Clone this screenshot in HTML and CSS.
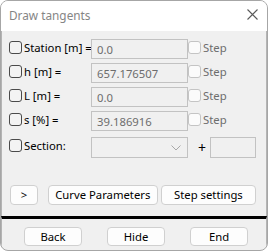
FILE: index.html
```html
<!DOCTYPE html>
<html lang="en">
<head>
    <meta charset="UTF-8">
    <title>Draw tangents</title>
    <link rel="stylesheet" href="styles.css">
</head>
<body>
    <div class="dialog">
        <div class="titlebar">
            <span class="title">Draw tangents</span>
            <svg class="close" width="11" height="11" viewBox="0 0 11 11">
                <path d="M0.5 0.5 L10.5 10.5 M10.5 0.5 L0.5 10.5" stroke="#5a5a5a" stroke-width="1.1" fill="none"/>
            </svg>
        </div>

        <div class="content">
            <div class="fields">
                <label class="check"><span class="box"></span><span class="label">Station [m] =</span></label>
                <div class="input">0.0</div>
                <label class="step"><span class="box light"></span>Step</label>

                <label class="check"><span class="box"></span><span class="label">h [m] =</span></label>
                <div class="input">657.176507</div>
                <label class="step"><span class="box light"></span>Step</label>

                <label class="check"><span class="box"></span><span class="label">L [m] =</span></label>
                <div class="input">0.0</div>
                <label class="step"><span class="box light"></span>Step</label>

                <label class="check"><span class="box"></span><span class="label">s [%] =</span></label>
                <div class="input">39.186916</div>
                <label class="step"><span class="box light"></span>Step</label>

                <label class="check section"><span class="box"></span><span class="label">Section:</span></label>
                <div class="combo section">
                    <span></span>
                    <svg width="10" height="6" viewBox="0 0 10 6">
                        <path d="M0.5 0.5 L5 5 L9.5 0.5" stroke="#a8a8a8" stroke-width="1" fill="none"/>
                    </svg>
                </div>
                <div class="plus section"><span class="sign">+</span><div class="small-input"></div></div>
            </div>

            <div class="actions">
                <button class="btn more">&gt;</button>
                <button class="btn curve">Curve Parameters</button>
                <button class="btn steps">Step settings</button>
            </div>
        </div>

        <div class="footer">
            <button class="btn foot">Back</button>
            <button class="btn foot">Hide</button>
            <button class="btn foot">End</button>
        </div>
    </div>
</body>
</html>
```

FILE: styles.css
```css
html, body {
    margin: 0;
    padding: 0;
    background: #ffffff;
}
body {
    font-family: 'Noto Sans', 'Open Sans', sans-serif;
    font-size: 11.3px;
    color: #000;
}
.dialog {
    width: 268px;
    height: 251px;
    box-sizing: border-box;
    border: 1px solid #a6a6a6;
    border-radius: 8px;
    overflow: hidden;
    background: #f0f0f0;
    display: flex;
    flex-direction: column;
}
.titlebar {
    height: 30px;
    flex: none;
    background: #fff;
    display: flex;
    align-items: center;
    justify-content: space-between;
    padding: 0 9px 0 8px;
}
.title {
    color: #858585;
    font-size: 11.8px;
    margin-top: -2px;
}
.close {
    margin-top: -3px;
}
.content {
    flex: 1;
    background: #f0f0f0;
    border-left: 1px solid #b4b4b4;
    border-right: 1px solid #b4b4b4;
    padding: 8px 10px 0 7px;
}
.fields {
    display: grid;
    grid-template-columns: 82px 97px auto;
    grid-auto-rows: 20px;
    row-gap: 4px;
}
.check {
    display: flex;
    align-items: center;
    white-space: nowrap;
    margin-top: -3px;
}
.box {
    flex: none;
    width: 11px;
    height: 11px;
    border: 1px solid #4a4a4a;
    border-radius: 3px;
    background: #f3f3f3;
    margin-right: 2px;
}
.box.light {
    border-color: #c4c4c4;
    background: #fbfbfb;
    margin-right: 2px;
}
.input {
    box-sizing: border-box;
    border: 1px solid #c2c2c2;
    background: #f0f0f0;
    color: #6d6d6d;
    padding-left: 5px;
    line-height: 19px;
}
.step {
    display: flex;
    align-items: center;
    color: #6d6d6d;
    margin-top: -4px;
}
.section {
    margin-top: 2px;
    height: 21px;
}
.check.section {
    margin-top: 0;
}
.combo {
    box-sizing: border-box;
    border: 1px solid #c2c2c2;
    background: #f0f0f0;
    display: flex;
    align-items: center;
    justify-content: flex-end;
    padding-right: 6px;
}
.plus {
    display: flex;
    align-items: center;
}
.sign {
    font-size: 14px;
    margin: 0 4px 0 10px;
}
.small-input {
    box-sizing: border-box;
    width: 46px;
    height: 21px;
    border: 1px solid #c2c2c2;
}
.actions {
    display: flex;
    gap: 3px;
    margin-top: 30px;
    padding-left: 1px;
}
.btn {
    font-family: inherit;
    font-size: 11.3px;
    color: #000;
    background: #fdfdfd;
    border: 1px solid #d0d0d0;
    border-radius: 4px;
    height: 20px;
    padding: 0;
    line-height: 16px;
}
.more {
    width: 28px;
    margin-right: 7px;
}
.curve {
    width: 111px;
}
.steps {
    width: 96px;
}
.footer {
    flex: none;
    height: 34px;
    border-top: 3px solid #000;
    border-left: 1px solid #b4b4b4;
    border-right: 1px solid #b4b4b4;
    display: flex;
    gap: 25px;
    padding: 8px 0 0 22px;
    box-sizing: border-box;
}
.foot {
    width: 58px;
    height: 19px;
}
```
